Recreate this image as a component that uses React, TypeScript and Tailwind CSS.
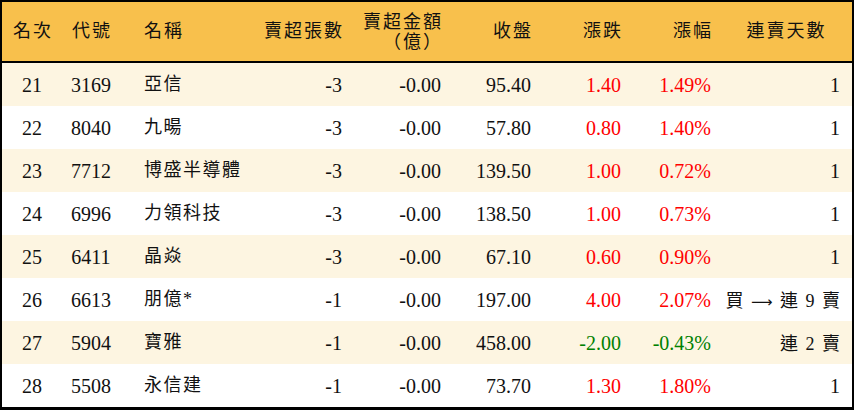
import React from "react";

type Row = {
  rank: number;
  code: string;
  name: string;
  lots: string;
  amount: string;
  close: string;
  change: string;
  pct: string;
  streak: string;
};

const rows: Row[] = [
  { rank: 21, code: "3169", name: "亞信", lots: "-3", amount: "-0.00", close: "95.40", change: "1.40", pct: "1.49%", streak: "1" },
  { rank: 22, code: "8040", name: "九暘", lots: "-3", amount: "-0.00", close: "57.80", change: "0.80", pct: "1.40%", streak: "1" },
  { rank: 23, code: "7712", name: "博盛半導體", lots: "-3", amount: "-0.00", close: "139.50", change: "1.00", pct: "0.72%", streak: "1" },
  { rank: 24, code: "6996", name: "力領科技", lots: "-3", amount: "-0.00", close: "138.50", change: "1.00", pct: "0.73%", streak: "1" },
  { rank: 25, code: "6411", name: "晶焱", lots: "-3", amount: "-0.00", close: "67.10", change: "0.60", pct: "0.90%", streak: "1" },
  { rank: 26, code: "6613", name: "朋億*", lots: "-1", amount: "-0.00", close: "197.00", change: "4.00", pct: "2.07%", streak: "買 ⟶ 連 9 賣" },
  { rank: 27, code: "5904", name: "寶雅", lots: "-1", amount: "-0.00", close: "458.00", change: "-2.00", pct: "-0.43%", streak: "連 2 賣" },
  { rank: 28, code: "5508", name: "永信建", lots: "-1", amount: "-0.00", close: "73.70", change: "1.30", pct: "1.80%", streak: "1" },
];

const cols = "grid grid-cols-[60px_58px_130px_102px_99px_90px_90px_90px_131px]";

// streak text: keep the arrow in a font that has a long arrow
function Streak({ text }: { text: string }) {
  if (text.length === 1) return <>{text}</>;
  return (
    <span className="text-[18px] [word-spacing:3px]">
      {text.split("⟶").map((part, i) =>
        i === 0 ? (
          <span key={i}>{part}</span>
        ) : (
          <span key={i}>
            <span style={{ fontFamily: '"DejaVu Sans", sans-serif' }} className="text-[15px]">⟶</span>
            {part}
          </span>
        )
      )}
    </span>
  );
}

export default function App() {
  return (
    <div
      className="w-[854px] h-[410px] bg-white border-2 border-b-[3px] border-black text-[#111]"
      style={{ fontFamily: '"Liberation Serif", "Noto Sans CJK TC", serif' }}
    >
      {/* header */}
      <div className={`${cols} h-[61px] bg-[#f8c04c] border-b-2 border-black items-center text-[18px] tracking-[2px]`}>
        <div className="text-center pl-[2px]">名次</div>
        <div className="text-center pl-[2px]">代號</div>
        <div className="pl-[24px]">名稱</div>
        <div className="text-right pr-[8px]">賣超張數</div>
        <div className="text-right pr-[8px] leading-[20px] pt-[1px]">
          <div>賣超金額</div>
          <div>（億）</div>
        </div>
        <div className="text-right pr-[8px]">收盤</div>
        <div className="text-right pr-[8px]">漲跌</div>
        <div className="text-right pr-[8px]">漲幅</div>
        <div className="text-center">連賣天數</div>
      </div>

      {/* rows */}
      {rows.map((r, i) => {
        const up = !r.change.startsWith("-");
        const color = up ? "text-[#ff0000]" : "text-[#008000]";
        return (
          <div
            key={r.rank}
            className={`${cols} h-[43px] items-center text-[20px] ${i % 2 === 0 ? "bg-[#fdf5e1]" : "bg-white"}`}
          >
            <div className="text-center">{r.rank}</div>
            <div className="text-center">{r.code}</div>
            <div className="pl-[24px] text-[18px] tracking-[1.5px]">{r.name}</div>
            <div className="text-right pr-[10px]">{r.lots}</div>
            <div className="text-right pr-[10px]">{r.amount}</div>
            <div className="text-right pr-[10px]">{r.close}</div>
            <div className={`text-right pr-[10px] ${color}`}>{r.change}</div>
            <div className={`text-right pr-[10px] ${color}`}>{r.pct}</div>
            <div className="text-right pr-[12px]">
              <Streak text={r.streak} />
            </div>
          </div>
        );
      })}
    </div>
  );
}
